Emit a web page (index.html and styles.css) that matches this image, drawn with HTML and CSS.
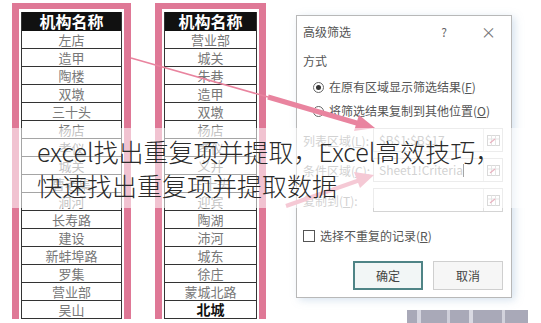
FILE: index.html
```html
<!DOCTYPE html>
<html lang="zh-CN">
<head>
    <meta charset="UTF-8">
    <meta name="viewport" content="width=device-width, initial-scale=1.0">
    <title>excel找出重复项并提取</title>
    <link rel="stylesheet" href="styles.css">
</head>
<body>
    <div class="page">
        <!-- 左表 -->
        <div class="frame">
            <div class="tbl tbl-wide">
                <div class="th">机构名称</div>
                <div class="td">左店</div>
                <div class="td">造甲</div>
                <div class="td">陶楼</div>
                <div class="td">双墩</div>
                <div class="td">三十头</div>
                <div class="td">杨店</div>
                <div class="td">孝仪</div>
                <div class="td">城关</div>
                <div class="td">曹老集</div>
                <div class="td">涧河</div>
                <div class="td">长寿路</div>
                <div class="td">建设</div>
                <div class="td">新蚌埠路</div>
                <div class="td">罗集</div>
                <div class="td">营业部</div>
                <div class="td">吴山</div>
            </div>
        </div>

        <!-- 右表 -->
        <div class="frame frame-right">
            <div class="tbl">
                <div class="th">机构名称</div>
                <div class="td">营业部</div>
                <div class="td">城关</div>
                <div class="td">朱巷</div>
                <div class="td">造甲</div>
                <div class="td">双墩</div>
                <div class="td">杨店</div>
                <div class="td">孝仪</div>
                <div class="td">义井</div>
                <div class="td">三十头</div>
                <div class="td">迎宾</div>
                <div class="td">陶湖</div>
                <div class="td">沛河</div>
                <div class="td">城东</div>
                <div class="td">徐庄</div>
                <div class="td">蒙城北路</div>
                <div class="td td-strong">北城</div>
            </div>
        </div>

        <!-- 高级筛选对话框 -->
        <div class="dlg">
            <div class="dlg-head">
                <span>高级筛选</span>
                <span class="dlg-help">?</span>
                <span class="dlg-close">×</span>
            </div>
            <div class="dlg-section">方式</div>
            <div class="opt opt-first"><span class="radio on"></span>在原有区域显示筛选结果(<u>F</u>)</div>
            <div class="opt"><span class="radio"></span>将筛选结果复制到其他位置(<u>O</u>)</div>

            <div class="field field-first">
                <span class="field-label">列表区域(<u>L</u>):</span>
                <span class="field-box"><span class="field-val">$B$1:$B$17</span><span class="ref-btn"><svg width="13" height="11" viewBox="0 0 13 11"><rect x="0.5" y="0.5" width="12" height="10" fill="#fff" stroke="#a8a8a8"/><path d="M0.5 4h12M4.5 0.5v10M8.5 0.5v10" stroke="#c4c4c4"/><path d="M3 8l5-4" stroke="#d05070" stroke-width="1.2"/></svg></span></span>
            </div>
            <div class="field">
                <span class="field-label">条件区域(<u>C</u>):</span>
                <span class="field-box"><span class="field-val">Sheet1!Criteria<span class="caret"></span></span><span class="ref-btn"><svg width="13" height="11" viewBox="0 0 13 11"><rect x="0.5" y="0.5" width="12" height="10" fill="#fff" stroke="#a8a8a8"/><path d="M0.5 4h12M4.5 0.5v10M8.5 0.5v10" stroke="#c4c4c4"/><path d="M3 8l5-4" stroke="#d05070" stroke-width="1.2"/></svg></span></span>
            </div>
            <div class="field">
                <span class="field-label">复制到(<u>T</u>):</span>
                <span class="field-box"><span class="field-val"></span><span class="ref-btn"><svg width="13" height="11" viewBox="0 0 13 11"><rect x="0.5" y="0.5" width="12" height="10" fill="#fff" stroke="#a8a8a8"/><path d="M0.5 4h12M4.5 0.5v10M8.5 0.5v10" stroke="#c4c4c4"/><path d="M3 8l5-4" stroke="#d05070" stroke-width="1.2"/></svg></span></span>
            </div>

            <div class="check"><span class="box"></span>选择不重复的记录(<u>R</u>)</div>

            <div class="dlg-btns">
                <button class="btn btn-ok">确定</button>
                <button class="btn">取消</button>
            </div>
        </div>
    </div>

    <!-- 箭头 -->
    <svg class="arrows" width="541" height="323" viewBox="0 0 541 323">
        <path d="M131 58L268 97" stroke="#e9849f" stroke-width="1.6"/>
        <path d="M268 97L360 124" stroke="#e9849f" stroke-width="5"/>
        <polygon points="375,128 354,131 359,115" fill="#e9849f"/>
        <path d="M286 206L360 180" stroke="#e9849f" stroke-width="4"/>
        <polygon points="374,175 360,188 354,172" fill="#e9849f"/>
    </svg>

    <div class="banner">excel找出重复项并提取，Excel高效技巧，快速找出重复项并提取数据</div>

    <div class="mark"></div>
</body>
</html>
```

FILE: styles.css
```css
body {
    margin: 0;
    width: 541px;
    height: 323px;
    overflow: hidden;
    background: #fff;
    font-family: "Noto Sans CJK SC", "Noto Sans", sans-serif;
    position: relative;
}
.page {
    display: flex;
    align-items: flex-start;
    padding-left: 12px;
    height: 323px;
}

/* 表格 */
.frame {
    margin-top: 3px;
    border: 7px solid #df7896;
    border-top-width: 6px;
    border-bottom: none;
    padding: 3px 2px 0;
    background: #fff;
}
.frame-right {
    margin-left: 24px;
}
.tbl {
    width: 91px;
    border-left: 1px solid #333;
    border-right: 1px solid #333;
    font-size: 13px;
    color: #777;
    text-align: center;
}
.tbl-wide {
    width: 99px;
}
.th {
    height: 19px;
    line-height: 19px;
    background: #111;
    color: #fff;
    font-size: 16px;
    font-weight: bold;
}
.td {
    height: 17px;
    line-height: 17px;
    border-bottom: 1px solid #333;
}
.td-strong {
    color: #111;
    font-weight: bold;
    font-size: 14px;
}

/* 对话框 */
.dlg {
    margin: 15px 0 0 30px;
    width: 216px;
    height: 283px;
    box-sizing: border-box;
    border: 1px solid #b8b8b8;
    background: #fff;
    padding: 8px 8px 0 6px;
    font-size: 12px;
    color: #555;
    box-shadow: 3px 2px 8px rgba(140, 175, 210, 0.35);
}
.dlg u {
    text-decoration: underline;
}
.dlg-head {
    display: flex;
    height: 16px;
    line-height: 16px;
}
.dlg-help {
    margin-left: auto;
    margin-right: 34px;
    color: #666;
}
.dlg-close {
    margin-right: 7px;
    font-size: 15px;
    color: #777;
}
.dlg-section {
    margin-top: 14px;
    line-height: 14px;
}
.opt {
    display: flex;
    align-items: center;
    margin-top: 10px;
    padding-left: 10px;
    height: 14px;
    line-height: 14px;
}
.opt-first {
    margin-top: 12px;
}
.radio {
    width: 9px;
    height: 9px;
    border: 1px solid #666;
    border-radius: 50%;
    margin-right: 5px;
    position: relative;
}
.radio.on::after {
    content: "";
    position: absolute;
    left: 2px;
    top: 2px;
    width: 5px;
    height: 5px;
    border-radius: 50%;
    background: #333;
}
.field {
    display: flex;
    align-items: center;
    margin-top: 6px;
    height: 24px;
}
.field-first {
    margin-top: 10px;
}
.field-label {
    width: 70px;
    color: #999;
}
.field-box {
    display: flex;
    width: 130px;
    height: 24px;
    box-sizing: border-box;
    border: 1px solid #d4d4d4;
}
.field-val {
    flex: 1;
    padding-left: 5px;
    line-height: 22px;
    color: #999;
}
.caret {
    display: inline-block;
    width: 1px;
    height: 13px;
    background: #333;
    vertical-align: -2px;
}
.ref-btn {
    width: 18px;
    border-left: 1px solid #e2e2e2;
    display: flex;
    align-items: center;
    justify-content: center;
}
.check {
    display: flex;
    align-items: center;
    margin-top: 18px;
    height: 12px;
    line-height: 12px;
}
.box {
    width: 10px;
    height: 10px;
    border: 1px solid #555;
    margin-right: 5px;
}
.dlg-btns {
    display: flex;
    justify-content: flex-end;
    gap: 10px;
    margin-top: 19px;
}
.btn {
    width: 70px;
    height: 29px;
    font-family: inherit;
    font-size: 12px;
    color: #444;
    background: #f6f6f6;
    border: 1px solid #cfcfcf;
    padding: 0;
}
.btn-ok {
    border: 2px solid #4f8486;
    background: #f2f6f6;
}

/* 叠加层 */
.arrows {
    position: absolute;
    left: 0;
    top: 0;
}
.banner {
    position: absolute;
    left: 0;
    right: 0;
    top: 128px;
    height: 80px;
    box-sizing: border-box;
    padding: 6px 40px 0 37px;
    background: rgba(255, 255, 255, 0.56);
    font-size: 25px;
    line-height: 34px;
    font-weight: 300;
    color: #2a2a2a;
}
.mark {
    position: absolute;
    left: 407px;
    top: 310px;
    width: 121px;
    height: 13px;
    background: #a9a9b8;
    background-image: linear-gradient(90deg, transparent 0 10px, #d6d6e0 10px 14px, transparent 14px 40px, #cfcfda 40px 43px, transparent 43px 62px, #d9d9e2 62px 66px, transparent 66px 95px, #d2d2dc 95px 98px, transparent 98px);
}
```
